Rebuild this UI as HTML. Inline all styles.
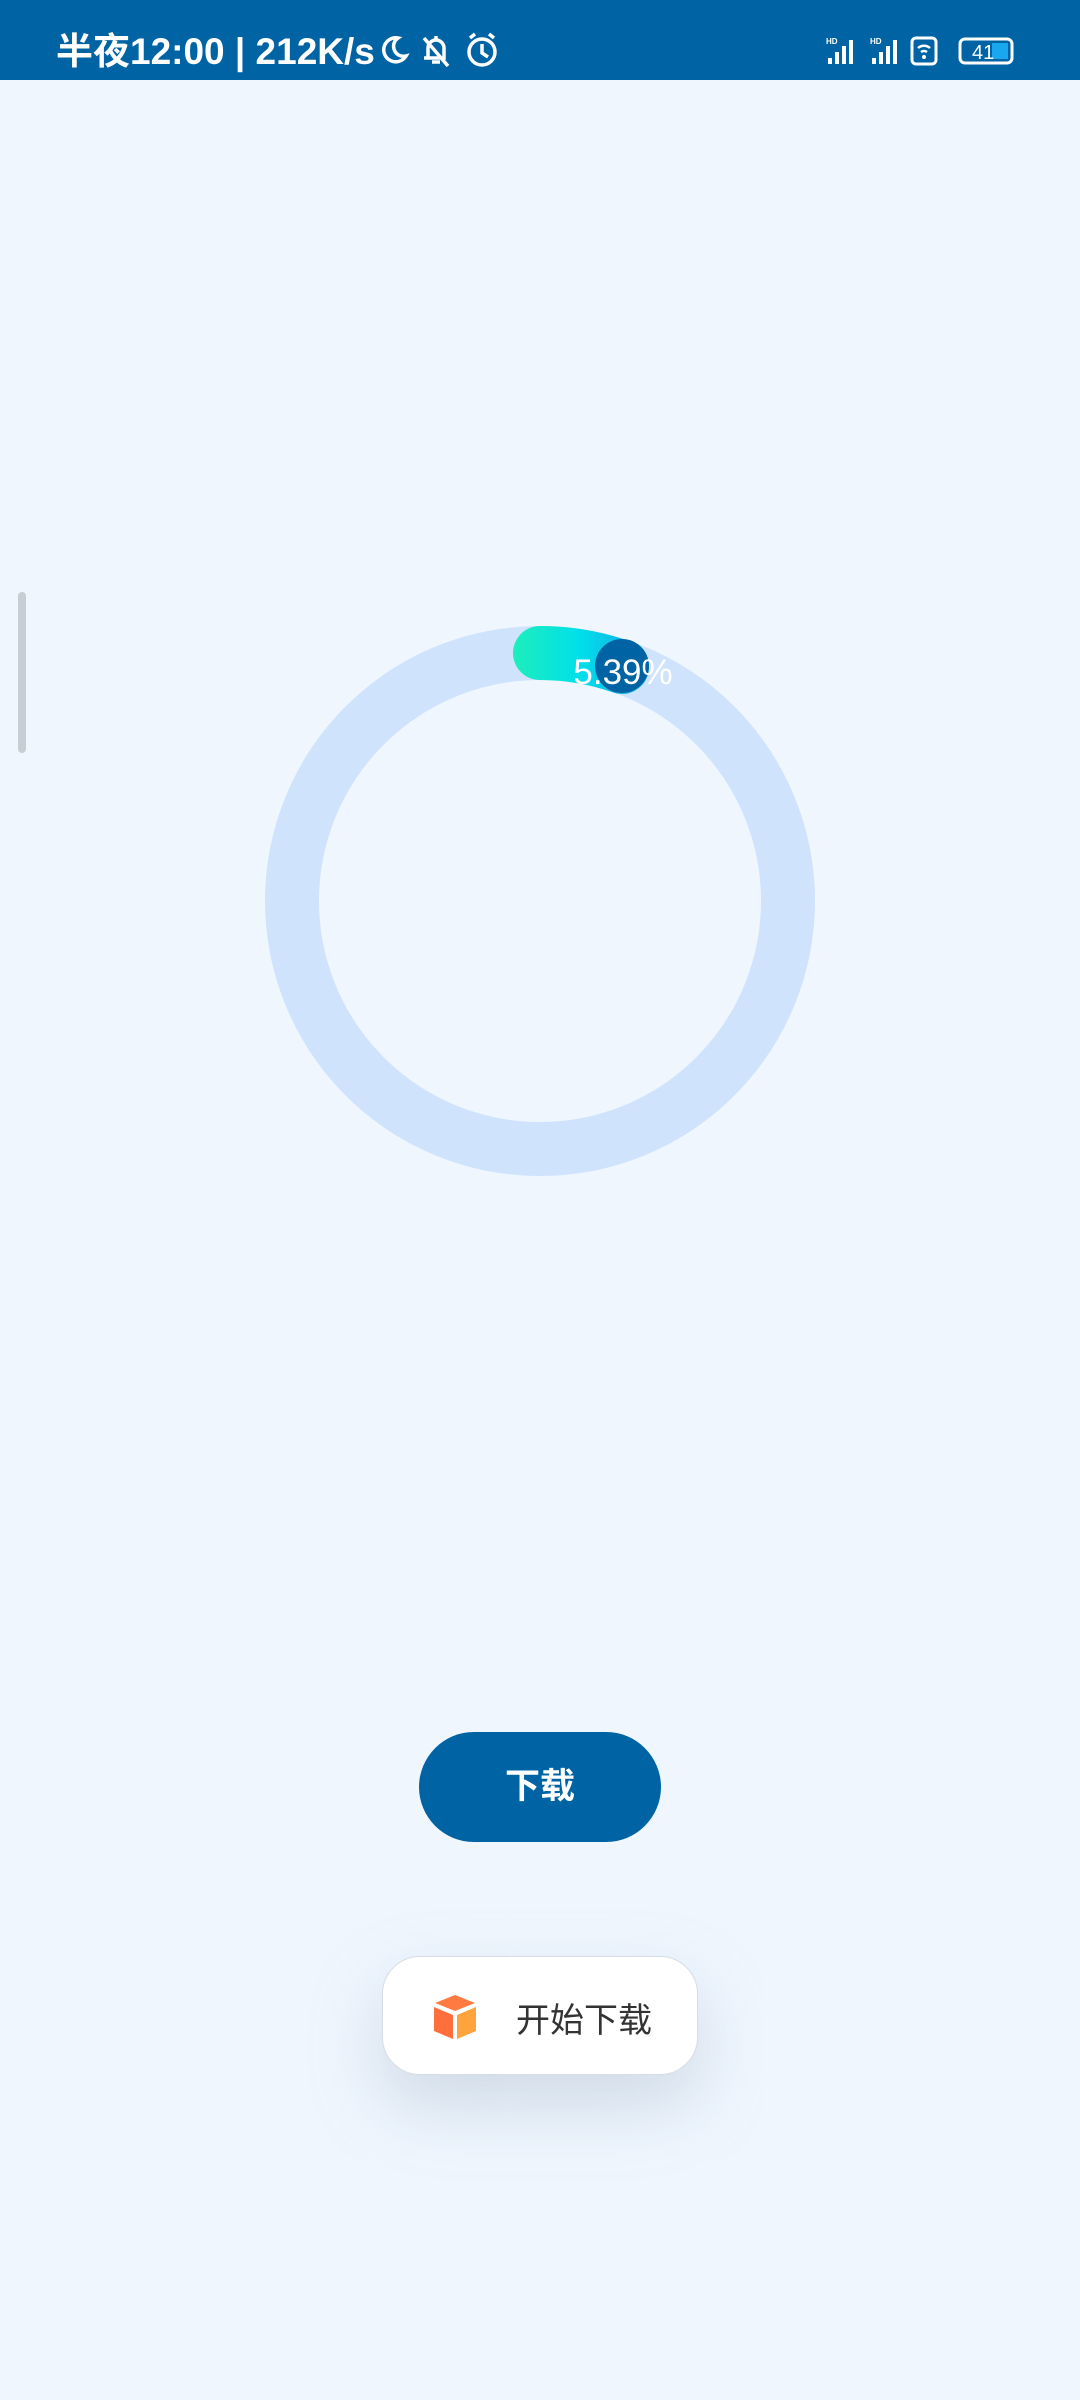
<!DOCTYPE html>
<html><head><meta charset="utf-8"><style>
body{margin:0;width:1080px;height:2400px;background:#EFF6FE;position:relative;overflow:hidden;font-family:"Liberation Sans","Noto Sans CJK SC",sans-serif}
.sb{position:absolute;left:0;top:0;width:1080px;height:80px;background:#0063A3;color:#fff}
.t{position:absolute;left:56px;top:32px;font-size:37px;line-height:40px;font-weight:bold}
.btn{position:absolute;left:419px;top:1732px;width:242px;height:110px;border-radius:55px;background:#0063A3;color:#fff;font-size:35px;line-height:110px;text-align:center;font-weight:bold}
.toast{position:absolute;left:382px;top:1956px;width:314px;height:117px;border-radius:38px;background:#fff;border:1px solid #d8dde3;box-shadow:0 30px 70px rgba(150,165,185,.35)}
.toast span{position:absolute;left:133px;top:36px;font-size:34px;color:#333}
</style></head><body>
<div class="sb"><div class="t">半夜12:00 | 212K/s</div>
<svg style="position:absolute;left:376px;top:32px" width="130" height="40" viewBox="0 0 130 40" fill="none" stroke="#fff" stroke-width="3.5">
<path d="M22 6 A12 12 0 1 0 30 24 A10 10 0 0 1 22 6Z"/>
<path d="M60 8 L60 4 M52 26 L52 16 A8 8 0 0 1 68 16 L68 26 L48 26 M56 30 L64 30 M48 6 L72 34"/>
<circle cx="106" cy="20" r="13"/><path d="M106 12 L106 21 L112 25 M94 6 L99 2 M118 6 L113 2"/></svg>
<svg style="position:absolute;left:820px;top:34px" width="200" height="36" viewBox="0 0 200 36">
<g fill="#fff"><rect x="8" y="24" width="4" height="6"/><rect x="15" y="18" width="4" height="12"/><rect x="22" y="12" width="4" height="18"/><rect x="29" y="6" width="4" height="24"/>
<rect x="52" y="24" width="4" height="6"/><rect x="59" y="18" width="4" height="12"/><rect x="66" y="12" width="4" height="18"/><rect x="73" y="6" width="4" height="24"/></g>
<text x="6" y="10" font-size="8" fill="#fff" font-weight="bold">HD</text><text x="50" y="10" font-size="8" fill="#fff" font-weight="bold">HD</text>
<rect x="92" y="4" width="24" height="26" rx="4" fill="none" stroke="#fff" stroke-width="3"/>
<path d="M98 14 A9 9 0 0 1 110 14 M101 18 A5 5 0 0 1 107 18" fill="none" stroke="#fff" stroke-width="2.5"/><circle cx="104" cy="23" r="2" fill="#fff"/>
<rect x="140" y="5" width="52" height="24" rx="5" fill="none" stroke="#fff" stroke-width="3"/><rect x="172" y="9" width="16" height="16" fill="#19a7f0"/>
<text x="152" y="25" font-size="20" fill="#fff">41</text></svg></div>
<div style="position:absolute;left:18px;top:592px;width:8px;height:161px;border-radius:4px;background:#c8ced6"></div>
<svg style="position:absolute;left:0;top:0" width="1080" height="1200">
<defs><linearGradient id="g" x1="513" y1="0" x2="623" y2="0" gradientUnits="userSpaceOnUse"><stop offset="0" stop-color="#1deebb"/><stop offset=".6" stop-color="#00e0ea"/><stop offset="1" stop-color="#10b8e8"/></linearGradient></defs>
<circle cx="540" cy="901" r="248" fill="none" stroke="#D0E3FD" stroke-width="54"/>
<path d="M540 653 A248 248 0 0 1 622 667" fill="none" stroke="url(#g)" stroke-width="54" stroke-linecap="round"/>
<circle cx="622" cy="666" r="27" fill="#0063A3"/>
<text x="623" y="684" font-size="35" fill="#fff" text-anchor="middle">5.39%</text>
</svg>
<div class="btn">下载</div>
<div class="toast"><svg style="position:absolute;left:48px;top:36px" width="48" height="48" viewBox="0 0 48 48"><path d="M24 2 L44 10 L24 18 L4 10Z" fill="#ff7a40"/><path d="M3 14 L22 22 L22 46 L3 38Z" fill="#ff6f3c"/><path d="M26 22 L45 14 L45 38 L26 46Z" fill="#ffa43c"/></svg><span>开始下载</span></div>
</body></html>
